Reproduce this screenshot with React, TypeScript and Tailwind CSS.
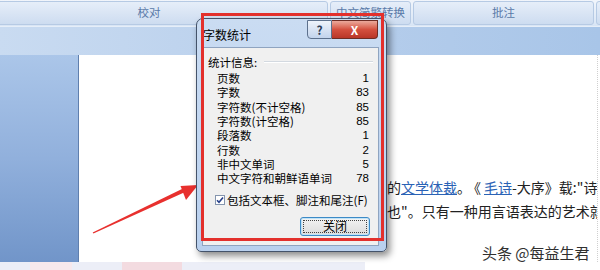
import React from "react";

const rows: [string, string][] = [
  ["页数", "1"],
  ["字数", "83"],
  ["字符数(不计空格)", "85"],
  ["字符数(计空格)", "85"],
  ["段落数", "1"],
  ["行数", "2"],
  ["非中文单词", "5"],
  ["中文字符和朝鲜语单词", "78"],
];

const RibbonGroup = ({ className, children }: { className: string; children: React.ReactNode }) => (
  <div
    className={`flex h-[24px] shrink-0 items-center justify-center rounded-[3px] border border-[#b6cae4] bg-gradient-to-b from-[#e6eef9] to-[#cddcf0] text-[11.5px] leading-none text-[#5a7aa8] ${className}`}
  >
    {children}
  </div>
);

const WordCountDialog = () => (
  <div
    className="absolute left-[196px] top-[18px] flex h-[234px] w-[191px] flex-col
      rounded-t-[7px] rounded-b-[5px] border border-[#44536a] bg-gradient-to-b
      from-[#cadcf2] to-[#b9d0ee] shadow-[3px_4px_7px_rgba(0,0,0,0.45)]"
  >
    {/* Title bar */}
    <div className="flex h-[28px] shrink-0 items-start">
      <span className="pl-[6px] pt-[9px] text-[12px] leading-[14px] text-black">字数统计</span>
      <div className="ml-auto mr-[8px] mt-[1px] flex">
        <div
          className="flex h-[19px] w-[25px] items-center justify-center rounded-bl-[4px] border
            border-[#5d718d] bg-gradient-to-b from-[#edf3fb] to-[#c3d4ec] text-[12px] font-bold
            leading-none text-[#2c3d58]"
        >
          ?
        </div>
        <div
          className="flex h-[19px] w-[46px] items-center justify-center rounded-br-[4px] border
            border-l-0 border-[#6e2c24] bg-gradient-to-b from-[#eaa99c] via-[#d4503f] to-[#b93628]
            text-[12px] font-bold leading-none text-white"
        >
          X
        </div>
      </div>
    </div>

    {/* Client area */}
    <div className="mb-[5px] ml-[5px] mr-[7px] flex-1 border border-[#8fa4c0] bg-[#f0f0f0] text-[11.5px] text-black">
      <div className="mt-[7px] flex h-[14px] items-center pl-[5px] pr-[5px] leading-[14px]">
        <span>统计信息:</span>
        <div className="ml-[7px] flex-1 border-t border-b border-t-[#d3d9e0] border-b-white" />
      </div>

      <div className="mt-[2px] flex h-[114.4px] flex-col pl-[14px] pr-[9px]">
        {rows.map(([label, value]) => (
          <div key={label} className="flex h-[14.3px] items-center justify-between leading-[14px]">
            <span>{label}</span>
            <span className="font-['Liberation_Sans',sans-serif]">{value}</span>
          </div>
        ))}
      </div>

      <div className="mt-[7.6px] flex h-[14px] items-center gap-[2px] pl-[12px] leading-[14px]">
        <div className="flex h-[10px] w-[10px] items-center justify-center border border-[#8495ae] bg-white">
          <svg width="8" height="8" viewBox="0 0 8 8" aria-hidden="true">
            <path d="M1 4.2 L3 6.3 L7 1.5" fill="none" stroke="#27408a" strokeWidth="1.6" />
          </svg>
        </div>
        <span className="text-[11.5px]">包括文本框、脚注和尾注(F)</span>
      </div>

      <div className="mt-[10px] flex justify-end pr-[8px]">
        <div
          className="flex h-[19px] w-[70px] items-center justify-center rounded-[3px] border
            border-[#3d8ac6] bg-gradient-to-b from-[#f4f4f4] to-[#dcdcdc] p-[2px]
            shadow-[inset_0_0_0_1px_#bfe3f8]"
        >
          <div className="flex h-full w-full items-center justify-center border border-dotted border-[#444] text-[12px] leading-none">
            关闭
          </div>
        </div>
      </div>
    </div>
  </div>
);

export default function App() {
  return (
    <div className="relative h-[270px] w-[600px] overflow-hidden bg-white font-['Noto_Sans_CJK_SC',sans-serif]">
      {/* Ribbon group labels */}
      <div className="flex h-[26px] gap-[2px] bg-gradient-to-b from-[#f1f5fb] to-[#d8e5f5] pt-[1px]">
        <RibbonGroup className="-ml-[30px] w-[358px]">校对</RibbonGroup>
        <RibbonGroup className="w-[81px]">中文简繁转换</RibbonGroup>
        <RibbonGroup className="w-[181px]">批注</RibbonGroup>
        <RibbonGroup className="w-[60px]">{""}</RibbonGroup>
      </div>

      {/* Ruler band */}
      <div className="h-[29px] border-t border-[#e6eef8] bg-gradient-to-r from-[#c9dbf1] via-[#b8cfec] to-[#a8c5e8]" />

      {/* Workspace */}
      <div className="flex h-[207px]">
        <div className="w-[79px] shrink-0 border-r border-[#5f7fae] bg-gradient-to-b from-[#abc6e9] via-[#91b0dc] to-[#7195c9]" />
        <div className="flex min-w-0 flex-1 bg-white">
          <div className="min-w-0 flex-1 overflow-hidden whitespace-nowrap pl-[308px] pt-[120px] text-[14px] leading-[24px] text-[#222]">
            <div>
              的<span className="text-[#2a62b5] underline">文学体裁</span>
              <span className="tracking-[3px]">。《</span>
              <span className="text-[#2a62b5] underline">毛诗</span>-大序》载:"诗者，志之所之也
            </div>
            <div>也"。只有一种用言语表达的艺术就是诗</div>
          </div>
          <div className="mr-[2px] w-[1px] shrink-0 border-l border-dotted border-[#cfcfcf]" />
        </div>
      </div>

      {/* Bottom strip */}
      <div className="flex h-[8px]">
        <div className="flex w-[365px] bg-[#eceef7]">
          <div className="ml-[30px] w-[42px] bg-[#f7e9ed]" />
          <div className="ml-[50px] w-[60px] bg-[#f3dbe0]" />
        </div>
        <div className="flex-1 bg-white" />
      </div>

      {/* Red annotation arrow */}
      <svg className="absolute left-0 top-0" width="600" height="270" aria-hidden="true">
        <polygon points="92.7,232.4 93.4,233.6 184.6,192.3 183.0,188.6" fill="#e8302e" />
        <polygon points="198,185 180.5,186 186,200" fill="#e8302e" />
      </svg>

      <WordCountDialog />

      {/* Red annotation rectangle */}
      <div className="absolute left-[201px] top-[13px] h-[228px] w-[183px] border-[3px] border-[#e3302c]" />

      {/* Watermark */}
      <div className="absolute left-[482px] top-[244px] text-[15px] leading-[18px] text-[#303030] [text-shadow:0_0_2px_#fff,0_0_2px_#fff]">
        头条 @每益生君
      </div>
    </div>
  );
}
